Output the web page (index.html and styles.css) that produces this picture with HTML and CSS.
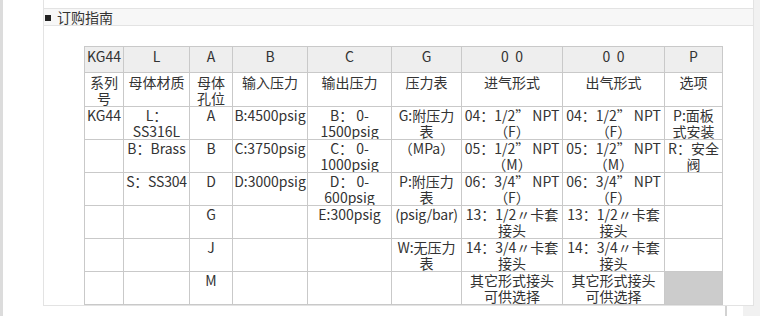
FILE: index.html
```html
<!DOCTYPE html>
<html lang="zh-CN">
<head>
<meta charset="utf-8">
<title>订购指南</title>
<link rel="stylesheet" href="styles.css">
</head>
<body>
<div class="rail"></div>
<div class="page">
  <div class="top">
    <div class="box">
      <div class="band"><span class="sq"></span><span class="title">订购指南</span></div>
      <table class="guide">
        <colgroup>
          <col class="c1"><col class="c2"><col class="c3"><col class="c4"><col class="c5"><col class="c6"><col class="c7"><col class="c8"><col class="c9">
        </colgroup>
        <tr class="hd">
          <td>KG44</td><td>L</td><td>A</td><td>B</td><td>C</td><td>G</td><td>0&nbsp;&nbsp;0</td><td>0&nbsp;&nbsp;0</td><td>P</td>
        </tr>
        <tr class="r2">
          <td>系列号</td><td>母体材质</td><td>母体孔位</td><td>输入压力</td><td>输出压力</td><td>压力表</td><td>进气形式</td><td>出气形式</td><td>选项</td>
        </tr>
        <tr class="rr">
          <td>KG44</td><td>L：<br>SS316L</td><td>A</td><td>B:4500psig</td><td>B：&nbsp;0-<br>1500psig</td><td>G:附压力<br>表</td><td>04：1/2”&nbsp;NPT<br>（F）</td><td>04：1/2”&nbsp;NPT<br>（F）</td><td>P:面板<br>式安装</td>
        </tr>
        <tr class="rr">
          <td></td><td>B：Brass</td><td>B</td><td>C:3750psig</td><td>C：&nbsp;0-<br>1000psig</td><td>（MPa）</td><td>05：1/2”&nbsp;NPT<br>（M）</td><td>05：1/2”&nbsp;NPT<br>（M）</td><td>R：安全<br>阀</td>
        </tr>
        <tr class="rr">
          <td></td><td class="tight">S：SS304</td><td>D</td><td>D:3000psig</td><td>D：&nbsp;0-<br>600psig</td><td>P:附压力<br>表</td><td>06：3/4”&nbsp;NPT<br>（F）</td><td>06：3/4”&nbsp;NPT<br>（F）</td><td></td>
        </tr>
        <tr class="rr">
          <td></td><td></td><td>G</td><td></td><td>E:300psig</td><td class="tight">(psig/bar)</td><td>13：1/2〃卡套<br>接头</td><td>13：1/2〃卡套<br>接头</td><td></td>
        </tr>
        <tr class="rr">
          <td></td><td></td><td>J</td><td></td><td></td><td>W:无压力<br>表</td><td>14：3/4〃卡套<br>接头</td><td>14：3/4〃卡套<br>接头</td><td></td>
        </tr>
        <tr class="rr">
          <td></td><td></td><td>M</td><td></td><td></td><td></td><td>其它形式接头<br>可供选择</td><td>其它形式接头<br>可供选择</td><td class="grey"></td>
        </tr>
      </table>
    </div>
    <div class="edge"></div>
  </div>
  <div class="foot">
    <div class="foot-gap"></div>
    <div class="foot-bar"></div>
    <div class="foot-gap2"></div>
    <div class="foot-fill"></div>
  </div>
</div>
</body>
</html>
```

FILE: styles.css
```css
html, body {
  margin: 0;
  padding: 0;
  background: #ffffff;
}
body {
  display: flex;
  height: 316px;
  overflow: hidden;
  font-family: "Noto Sans CJK SC", "Noto Sans", sans-serif;
  font-size: 14px;
  color: #333333;
}
.rail {
  width: 3px;
  background: #dcdcdc;
  margin-right: 40px;
  flex: none;
}
.page {
  width: 717px;
  display: flex;
  flex-direction: column;
  flex: none;
}
.top {
  display: flex;
  height: 306px;
}
.box {
  width: 711px;
  height: 306px;
  box-sizing: border-box;
  border-left: 1px solid #e3e3e3;
  border-right: 1px solid #e3e3e3;
  border-bottom: 1px solid #e3e3e3;
  flex: none;
}
.edge {
  flex: 1;
  background: #f1f1f1;
}
.foot {
  display: flex;
  height: 10px;
}
.foot-gap { width: 682px; }
.foot-bar { width: 2px; background: #d2d2d2; }
.foot-gap2 { width: 16px; }
.foot-fill { flex: 1; background: #f1f1f1; }

.band {
  margin-top: 8px;
  height: 16px;
  border-top: 1px solid #e3e3e3;
  border-bottom: 1px solid #e3e3e3;
  background: #f7f7f7;
  display: flex;
  align-items: center;
  line-height: 16px;
}
.sq {
  width: 6px;
  height: 6px;
  background: #222222;
  margin-left: 1px;
  margin-right: 6px;
  margin-top: 2px;
}
.title {
  color: #333333;
  font-size: 14px;
}

.guide {
  margin-top: 20px;
  margin-left: 40px;
  border-collapse: collapse;
  table-layout: fixed;
  width: 639px;
}
.c1 { width: 39px; }
.c2 { width: 66px; }
.c3 { width: 43px; }
.c4 { width: 75px; }
.c5 { width: 84px; }
.c6 { width: 70px; }
.c7 { width: 101px; }
.c8 { width: 102px; }
.c9 { width: 58px; }

.guide td {
  border: 1px solid #c9c9c9;
  padding: 0 1px;
  text-align: center;
  vertical-align: top;
  line-height: 16px;
  white-space: nowrap;
  overflow: hidden;
}
.hd td {
  background: #eeeeee;
  height: 26px;
  box-sizing: border-box;
  padding-top: 1px;
}
.r2 td {
  height: 33px;
  box-sizing: border-box;
  white-space: normal;
  padding-top: 1px;
}
.rr td {
  height: 32px;
  box-sizing: border-box;
  padding-top: 0;
}
.guide td.grey {
  background: #cccccc;
}
.tight {
  letter-spacing: -0.2px;
}
```
